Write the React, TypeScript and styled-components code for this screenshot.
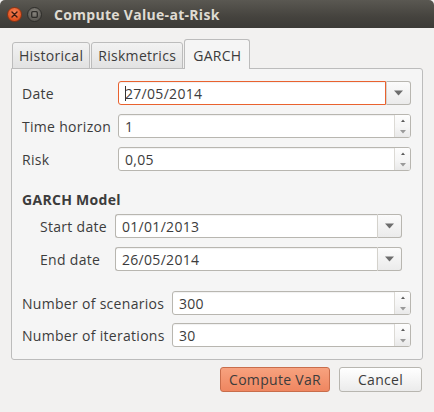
import React from "react";
import styled, { createGlobalStyle } from "styled-components";

const GlobalStyle = createGlobalStyle`
  html, body {
    margin: 0;
    padding: 0;
    background: #f2f1f0;
  }
  body {
    font-family: "Open Sans", "Noto Sans", "DejaVu Sans", sans-serif;
    font-size: 14px;
    letter-spacing: 0.3px;
    color: #3c3c3c;
  }
`;

const DownArrow: React.FC<{ small?: boolean }> = ({ small }) =>
  small ? (
    <svg width="6" height="4" viewBox="0 0 6 4">
      <path d="M0 0 L6 0 L3 3.5 Z" fill="#9a9a9a" />
    </svg>
  ) : (
    <svg width="9" height="6" viewBox="0 0 9 6">
      <path d="M0 0.5 L9 0.5 L4.5 5.5 Z" fill="#6d6d6d" />
    </svg>
  );

const UpArrow = () => (
  <svg width="4" height="3" viewBox="0 0 4 3">
    <path d="M0 3 L4 3 L2 0.5 Z" fill="#5a5a5a" />
  </svg>
);

const ComboField: React.FC<{ value: string; focused?: boolean }> = ({ value, focused }) => (
  <Combo>
    <ComboText $focused={focused}>
      {focused && <Caret />}
      {value}
    </ComboText>
    <ComboButton>
      <DownArrow />
    </ComboButton>
  </Combo>
);

const SpinField: React.FC<{ value: string }> = ({ value }) => (
  <Spin>
    <SpinText>{value}</SpinText>
    <SpinButtons>
      <SpinHalf>
        <UpArrow />
      </SpinHalf>
      <SpinHalf $down>
        <DownArrow small />
      </SpinHalf>
    </SpinButtons>
  </Spin>
);

const App: React.FC = () => {
  return (
    <Window>
      <GlobalStyle />
      <TitleBar>
        <WinButton $close>
          <svg width="7" height="7" viewBox="0 0 7 7">
            <path d="M1 1 L6 6 M6 1 L1 6" stroke="#3a1a10" strokeWidth="1.4" strokeLinecap="round" />
          </svg>
        </WinButton>
        <WinButton>
          <svg width="7" height="7" viewBox="0 0 7 7">
            <rect x="0.7" y="0.7" width="5.6" height="5.6" rx="1" fill="none" stroke="#2e2d2a" strokeWidth="1.3" />
          </svg>
        </WinButton>
        <Title>Compute Value-at-Risk</Title>
      </TitleBar>

      <Body>
        <TabBar>
          <Tab>Historical</Tab>
          <Tab>Riskmetrics</Tab>
          <Tab $active>GARCH</Tab>
        </TabBar>

        <Panel>
          <FormGrid $label={96} $gap={9}>
            <Label>Date</Label>
            <ComboField value="27/05/2014" focused />
            <Label>Time horizon</Label>
            <SpinField value="1" />
            <Label>Risk</Label>
            <SpinField value="0,05" />
          </FormGrid>

          <Heading>GARCH Model</Heading>

          <SubGroup>
            <FormGrid $label={75} $gap={9}>
              <Label>Start date</Label>
              <ComboField value="01/01/2013" />
              <Label>End date</Label>
              <ComboField value="26/05/2014" />
            </FormGrid>
          </SubGroup>

          <BottomGroup>
            <FormGrid $label={150} $gap={8}>
              <Label>Number of scenarios</Label>
              <SpinField value="300" />
              <Label>Number of iterations</Label>
              <SpinField value="30" />
            </FormGrid>
          </BottomGroup>
        </Panel>

        <ButtonRow>
          <Button $primary style={{ width: 110 }}>Compute VaR</Button>
          <Button style={{ width: 83 }}>Cancel</Button>
        </ButtonRow>
      </Body>
    </Window>
  );
};

// Styled Components

const Window = styled.div`
  width: 434px;
  height: 412px;
  display: flex;
  flex-direction: column;
  background: #f2f1f0;
  overflow: hidden;
`;

const TitleBar = styled.div`
  height: 28px;
  flex-shrink: 0;
  display: flex;
  align-items: center;
  padding-left: 7px;
  gap: 5px;
  background: linear-gradient(#5a5852, #45433e 60%, #3c3b37);
  border-radius: 5px 5px 0 0;
`;

const WinButton = styled.div<{ $close?: boolean }>`
  width: 15px;
  height: 15px;
  border-radius: 50%;
  display: flex;
  align-items: center;
  justify-content: center;
  box-sizing: border-box;
  border: 1px solid ${(p) => (p.$close ? "#8f3312" : "#2f2e2b")};
  background: ${(p) =>
    p.$close
      ? "radial-gradient(circle at 50% 35%, #f7855a, #e2521f 70%)"
      : "radial-gradient(circle at 50% 35%, #8a8780, #5c5a55 70%)"};
`;

const Title = styled.div`
  margin-left: 7px;
  font-family: "Open Sans", "DejaVu Sans", sans-serif;
  font-weight: 700;
  font-size: 14px;
  letter-spacing: 0.3px;
  color: #dfdbd2;
`;

const Body = styled.div`
  padding: 11px 11px 0 11px;
`;

const TabBar = styled.div`
  display: flex;
  align-items: flex-end;
  height: 30px;
  padding-left: 1px;
  margin-bottom: -1px;
  position: relative;
  z-index: 1;
`;

const Tab = styled.div<{ $active?: boolean }>`
  box-sizing: border-box;
  height: ${(p) => (p.$active ? 30 : 27)}px;
  padding: 0 ${(p) => (p.$active ? 8 : 6)}px;
  display: flex;
  align-items: center;
  padding-top: ${(p) => (p.$active ? 1 : 0)}px;
  border: 1px solid #bcbcbc;
  border-bottom: ${(p) => (p.$active ? "none" : "1px solid #bcbcbc")};
  border-radius: 3px 3px 0 0;
  background: ${(p) => (p.$active ? "#f5f5f5" : "linear-gradient(#f2f2f2, #e2e2e2)")};
  color: #3c3c3c;
  & + & {
    margin-left: ${(p) => (p.$active ? 1 : -1)}px;
  }
`;

const Panel = styled.div`
  border: 1px solid #bcbcbc;
  border-radius: 0 3px 3px 3px;
  background: #f5f5f5;
  padding: 12px 11px 12px 10px;
`;

const FormGrid = styled.div<{ $label: number; $gap: number }>`
  display: grid;
  grid-template-columns: ${(p) => p.$label}px 1fr;
  row-gap: ${(p) => p.$gap}px;
  align-items: center;
`;

const Label = styled.div`
  white-space: nowrap;
  color: #3c3c3c;
`;

const Heading = styled.div`
  margin: 20px 0 5px;
  line-height: 18px;
  font-weight: 700;
  color: #3c3c3c;
`;

const SubGroup = styled.div`
  margin: 0 9px 0 18px;
`;

const BottomGroup = styled.div`
  margin-top: 20px;
`;

const Combo = styled.div`
  display: flex;
  height: 24px;
`;

const ComboText = styled.div<{ $focused?: boolean }>`
  flex: 1;
  box-sizing: border-box;
  display: flex;
  align-items: center;
  padding-left: 6px;
  background: #fff;
  border: 1px solid ${(p) => (p.$focused ? "#e9622f" : "#b8b6b0")};
  border-right: ${(p) => (p.$focused ? "1px solid #e9622f" : "none")};
  border-radius: 3px 0 0 3px;
  box-shadow: inset 0 1px 1px rgba(0, 0, 0, 0.06);
`;

const Caret = styled.span`
  display: inline-block;
  width: 1px;
  height: 15px;
  background: #333;
  margin-right: -1px;
`;

const ComboButton = styled.div`
  width: 25px;
  box-sizing: border-box;
  display: flex;
  align-items: center;
  justify-content: center;
  border: 1px solid #b8b6b0;
  border-left: 1px solid #d4d2cc;
  border-radius: 0 3px 3px 0;
  background: linear-gradient(#fbfbfb, #ebebeb);
`;

const Spin = styled.div`
  display: flex;
  height: 24px;
  box-sizing: border-box;
  border: 1px solid #b8b6b0;
  border-radius: 3px;
  background: #fff;
  overflow: hidden;
  box-shadow: inset 0 1px 1px rgba(0, 0, 0, 0.06);
`;

const SpinText = styled.div`
  flex: 1;
  display: flex;
  align-items: center;
  padding-left: 6px;
`;

const SpinButtons = styled.div`
  width: 15px;
  display: flex;
  flex-direction: column;
  border-left: 1px solid #dcdad5;
  background: linear-gradient(#fdfdfd, #efefef);
`;

const SpinHalf = styled.div<{ $down?: boolean }>`
  flex: 1;
  display: flex;
  align-items: center;
  justify-content: center;
  background: ${(p) => (p.$down ? "linear-gradient(#f7f7f7, #e9e9e9)" : "transparent")};
`;

const ButtonRow = styled.div`
  display: flex;
  justify-content: flex-end;
  gap: 9px;
  margin-top: 7px;
  padding-right: 1px;
`;

const Button = styled.div<{ $primary?: boolean }>`
  box-sizing: border-box;
  height: 25px;
  display: flex;
  align-items: center;
  justify-content: center;
  border-radius: 3px;
  border: 1px solid ${(p) => (p.$primary ? "#c86d4b" : "#b8b6b0")};
  background: ${(p) =>
    p.$primary ? "linear-gradient(#f7a27f, #ef8660)" : "linear-gradient(#ffffff, #ebebeb)"};
  color: #3c3c3c;
`;

export default App;
